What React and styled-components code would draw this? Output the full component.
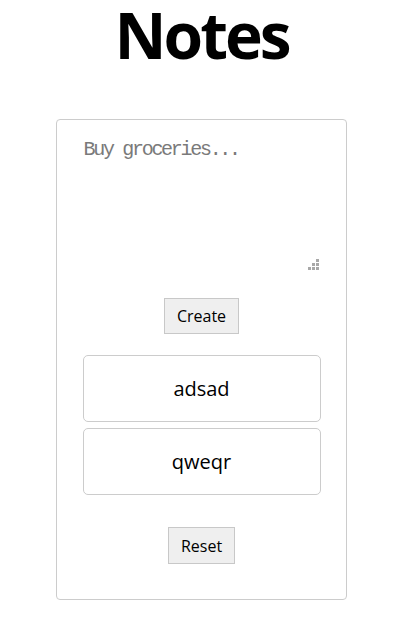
import React from "react";
import styled, { createGlobalStyle } from "styled-components";

const Global = createGlobalStyle`
  html, body { margin: 0; padding: 0; background: #fff; }
  body { font-family: "Open Sans", "Noto Sans", sans-serif; color: #000; }
`;

const Page = styled.div`
  width: 403px;
  display: flex;
  flex-direction: column;
  align-items: center;
`;

const Title = styled.h1`
  margin: 0;
  font-family: "Open Sans", "Noto Sans", sans-serif;
  font-weight: 700;
  font-size: 64px;
  line-height: 70px;
  letter-spacing: -3px;
`;

const Card = styled.div`
  margin-top: 49px;
  width: 291px;
  box-sizing: border-box;
  border: 1px solid #cccccc;
  border-radius: 4px;
  padding: 17px 25px 35px 25px;
  display: flex;
  flex-direction: column;
  align-items: center;
`;

const AreaWrap = styled.div`
  position: relative;
  width: 238px;
  height: 135px;
`;

const Area = styled.textarea`
  width: 100%;
  height: 100%;
  box-sizing: border-box;
  border: none;
  outline: none;
  resize: none;
  padding: 2px 1px;
  font-family: "Liberation Mono", monospace;
  font-size: 20px;
  line-height: 22px;
  letter-spacing: -2.3px;
  color: #000;
  &::placeholder { color: #7a7a7a; }
`;

const Grip = styled.svg`
  position: absolute;
  right: 2px;
  bottom: 2px;
  width: 11px;
  height: 11px;
`;

const Button = styled.button`
  margin-top: ${(p) => p.$top}px;
  width: ${(p) => p.$w}px;
  height: ${(p) => p.$h}px;
  background: #efefef;
  border: 1px solid #c8c8c8;
  border-radius: 0;
  padding: 0;
  font-family: "Open Sans", "Noto Sans", sans-serif;
  font-size: 16px;
  color: #000;
`;

const List = styled.div`
  margin-top: 21px;
  width: 238px;
  display: flex;
  flex-direction: column;
  gap: 6px;
`;

const Note = styled.div`
  height: 67px;
  box-sizing: border-box;
  border: 1px solid #cccccc;
  border-radius: 5px;
  display: flex;
  align-items: center;
  justify-content: center;
  font-size: 20px;
`;

export default function App() {
  return (
    <>
      <Global />
      <Page>
        <Title>Notes</Title>
        <Card>
          <AreaWrap>
            <Area placeholder="Buy groceries..." />
            <Grip viewBox="0 0 11 11">
              <g fill="#a8a8a8">
                <rect x="8" y="0" width="3" height="3" />
                <rect x="4" y="4" width="3" height="3" />
                <rect x="8" y="4" width="3" height="3" />
                <rect x="0" y="8" width="3" height="3" />
                <rect x="4" y="8" width="3" height="3" />
                <rect x="8" y="8" width="3" height="3" />
              </g>
            </Grip>
          </AreaWrap>
          <Button $top={26} $w={75} $h={36}>Create</Button>
          <List>
            <Note>adsad</Note>
            <Note>qweqr</Note>
          </List>
          <Button $top={32} $w={67} $h={37}>Reset</Button>
        </Card>
      </Page>
    </>
  );
}
